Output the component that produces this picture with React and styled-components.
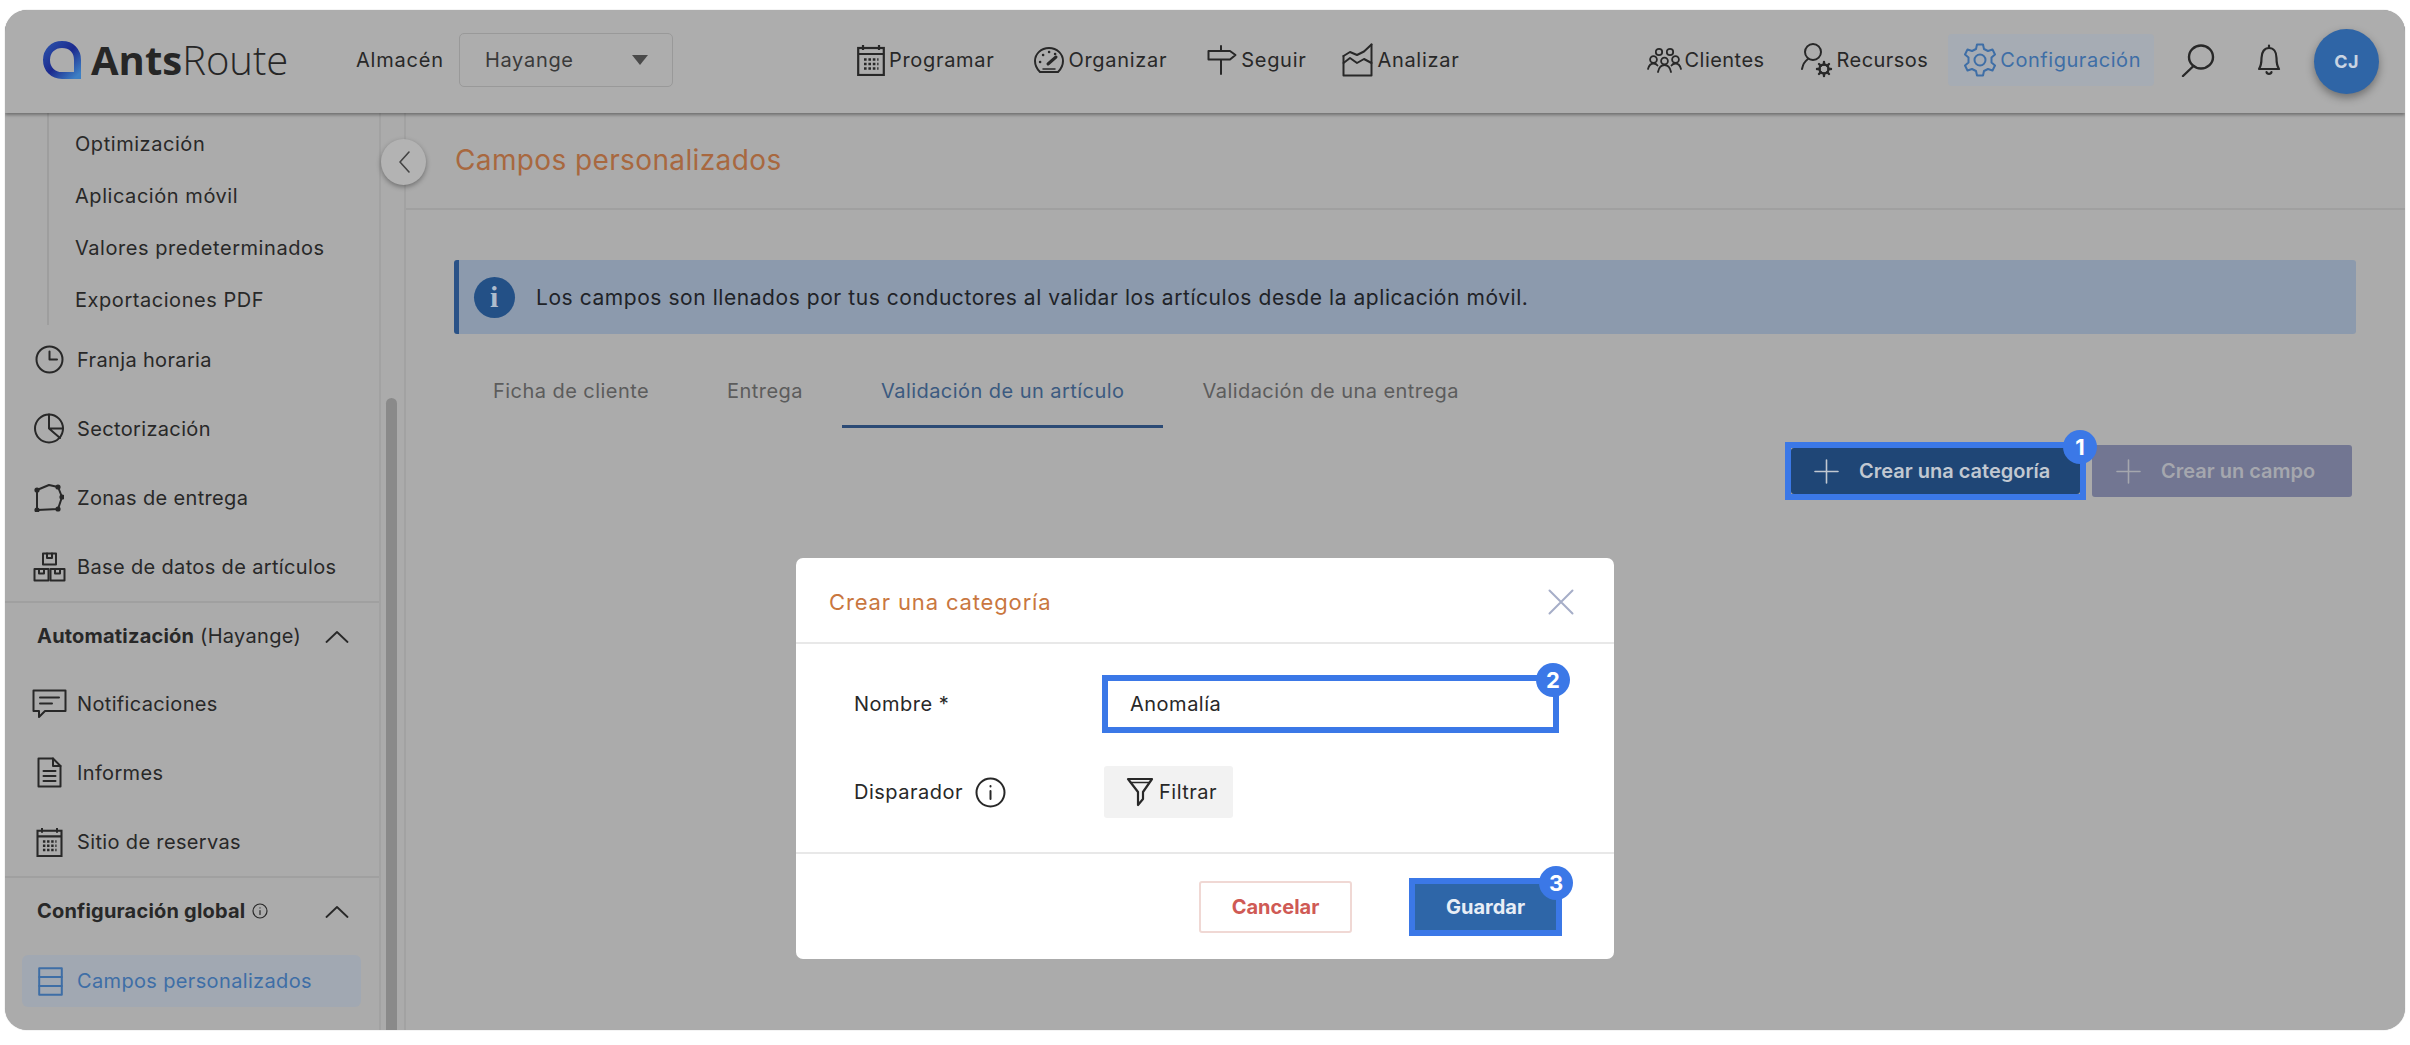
import React from "react";
import styled, { createGlobalStyle } from "styled-components";

const FONT = `"Inter", "Noto Sans", sans-serif`;
const ANNOTATE = "#3b78e7";

const GlobalStyle = createGlobalStyle`
  html, body {
    margin: 0;
    background: #fff;
  }
  body {
    font-family: ${FONT};
    color: #282828;
  }
  * {
    box-sizing: border-box;
  }
`;

const Page = styled.div`
  width: 2410px;
  height: 1045px;
  padding: 10px 5px 15px;
`;

const Frame = styled.div`
  position: relative;
  height: 100%;
  background: #ababab;
  border-radius: 22px;
  box-shadow: 0 0 1px #8f8f8f;
  overflow: hidden;
  display: flex;
  flex-direction: column;
`;

const Header = styled.header`
  height: 103px;
  flex: none;
  position: relative;
  z-index: 2;
  display: flex;
  align-items: center;
  padding: 0 26px 3px 37px;
  background: #adadad;
  box-shadow: 0 2px 3px rgba(0, 0, 0, 0.35);
`;

const Logo = styled.div`
  display: flex;
  align-items: center;
  gap: 9px;
  width: 246px;
  svg {
    flex: none;
  }
`;

const LogoText = styled.span`
  font-family: "Open Sans", sans-serif;
  font-size: 40px;
  font-weight: 300;
  line-height: 1;
  color: #262626;
  b {
    font-weight: 700;
  }
`;

const StoreLabel = styled.span`
  margin-left: 68px;
  font-size: 20px;
  letter-spacing: 0.8px;
`;

const StoreSelect = styled.div`
  margin-left: 15px;
  width: 214px;
  height: 54px;
  display: flex;
  align-items: center;
  justify-content: space-between;
  padding: 0 24px 0 25px;
  border: 1px solid #999;
  border-radius: 5px;
  font-size: 20px;
  color: #3a3a3a;
  letter-spacing: 0.7px;
`;

const Caret = styled.span`
  width: 0;
  height: 0;
  border-left: 8px solid transparent;
  border-right: 8px solid transparent;
  border-top: 10px solid #4a4a4a;
`;

const MainNav = styled.nav`
  margin-left: 184px;
  display: flex;
  align-items: center;
  gap: 40px;
  letter-spacing: 0.7px;
`;

const SideNav = styled.nav`
  margin-left: auto;
  display: flex;
  align-items: center;
  letter-spacing: 0.45px;
`;

const NavItem = styled.a`
  display: flex;
  align-items: center;
  gap: ${(p) => (p.$tight ? 3 : 4)}px;
  font-size: 20px;
  color: ${(p) => (p.$active ? "#3e6ea6" : "#282828")};
  margin-left: ${(p) => p.$gap || 0}px;
  ${(p) =>
    p.$active &&
    `
    height: 52px;
    padding: 0 13px 0 16px;
    letter-spacing: 0.55px;
    background: #a6acb4;
    border-radius: 4px;
  `}
`;

const IconButton = styled.span`
  display: flex;
  margin-left: ${(p) => p.$gap}px;
`;

const Avatar = styled.div`
  margin: 3px 0 0 33px;
  width: 65px;
  height: 65px;
  border-radius: 50%;
  background: #2f65a6;
  color: #c9d4e2;
  font-size: 18px;
  font-weight: 700;
  display: flex;
  align-items: center;
  justify-content: center;
  box-shadow: 0 4px 8px rgba(0, 0, 0, 0.35);
`;

const Body = styled.div`
  position: relative;
  flex: 1;
  min-height: 0;
  display: flex;
`;

const Sidebar = styled.aside`
  width: 376px;
  flex: none;
  border-right: 2px solid #a2a2a2;
  overflow: hidden;
`;

const SubList = styled.div`
  margin-left: 42px;
  height: 212px;
  padding: 5px 0 0 26px;
  border-left: 2px solid #9e9e9e;
`;

const SubItem = styled.div`
  height: 52px;
  display: flex;
  align-items: center;
  font-size: 20px;
  letter-spacing: 0.55px;
`;

const MenuRow = styled.div`
  height: ${(p) => (p.$active ? 52 : 69)}px;
  margin: ${(p) => (p.$active ? "11px 18px 0 17px" : "0 18px 0 12px")};
  padding-left: ${(p) => (p.$active ? 9 : 13)}px;
  display: flex;
  align-items: center;
  gap: ${(p) => (p.$active ? 8 : 9)}px;
  font-size: 20px;
  letter-spacing: 0.35px;
  border-radius: 6px;
  color: ${(p) => (p.$active ? "#3e6ea6" : "#282828")};
  background: ${(p) => (p.$active ? "#a1a8b2" : "transparent")};
`;

const MenuIcon = styled.span`
  width: 38px;
  flex: none;
  display: flex;
  justify-content: center;
`;

const SectionHead = styled.div`
  height: 68px;
  display: flex;
  align-items: center;
  justify-content: space-between;
  padding: 0 30px 0 32px;
  font-size: 20px;
  letter-spacing: 0.3px;
  border-top: 2px solid #a0a0a0;
`;

const SectionTitle = styled.span`
  display: flex;
  align-items: center;
  gap: 7px;
  b {
    font-weight: 700;
    letter-spacing: 0.2px;
  }
`;

const ScrollGutter = styled.div`
  width: 25px;
  flex: none;
  padding: 285px 7px 0 5px;
  border-right: 2px solid #a2a2a2;
`;

const ScrollThumb = styled.div`
  height: 100%;
  background: #8a8a8a;
  border-radius: 7px 7px 0 0;
`;

const CollapseButton = styled.button`
  position: absolute;
  left: 376px;
  top: 26px;
  width: 45px;
  height: 46px;
  padding: 0;
  border: none;
  border-radius: 50%;
  background: #b3b3b3;
  color: #444;
  display: flex;
  align-items: center;
  justify-content: center;
  box-shadow: 0 2px 5px rgba(0, 0, 0, 0.35);
`;

const Main = styled.main`
  flex: 1;
  min-width: 0;
`;

const TitleBar = styled.div`
  height: 97px;
  padding-left: 49px;
  display: flex;
  align-items: center;
  border-bottom: 2px solid #a0a0a0;
`;

const PageTitle = styled.h1`
  margin: 0 0 2px;
  font-size: 28px;
  font-weight: 400;
  letter-spacing: 0.38px;
  color: #a8683f;
`;

const Content = styled.div`
  padding: 50px 49px 0 48px;
`;

const Banner = styled.div`
  height: 74px;
  display: flex;
  align-items: center;
  gap: 21px;
  padding-left: 15px;
  background: #8c9aad;
  border-left: 5px solid #2a5287;
  border-radius: 3px;
  font-size: 21px;
  letter-spacing: 0.56px;
  color: #1f2328;
`;

const InfoDot = styled.span`
  width: 41px;
  height: 41px;
  border-radius: 50%;
  background: #235086;
  color: #aebccd;
  font-family: "Liberation Serif", serif;
  font-size: 30px;
  font-weight: 700;
  display: flex;
  align-items: center;
  justify-content: center;
`;

const Tabs = styled.div`
  margin-top: 26px;
  display: flex;
`;

const Tab = styled.div`
  height: 68px;
  padding: 0 39px 4px;
  display: flex;
  align-items: center;
  font-size: 20px;
  letter-spacing: 0.45px;
  color: ${(p) => (p.$active ? "#3b5a80" : "#5c5c5c")};
  border-bottom: 3px solid ${(p) => (p.$active ? "#2b4a75" : "transparent")};
`;

const Actions = styled.div`
  margin-top: 14px;
  padding-right: 4px;
  display: flex;
  justify-content: flex-end;
  align-items: center;
  gap: 6px;
`;

const Marked = styled.div`
  position: relative;
  display: flex;
  border: 6px solid ${ANNOTATE};
`;

const Badge = styled.span`
  position: absolute;
  top: -18px;
  right: -17px;
  width: 34px;
  height: 34px;
  border-radius: 50%;
  background: ${ANNOTATE};
  color: #fff;
  font-size: 22px;
  font-weight: 700;
  display: flex;
  align-items: center;
  justify-content: center;
`;

const CreateButton = styled.button`
  width: ${(p) => p.$width}px;
  height: ${(p) => p.$height}px;
  padding: 0 0 0 ${(p) => p.$inset}px;
  border: none;
  border-radius: 3px;
  background: ${(p) => (p.$disabled ? "#727692" : "#1f4676")};
  color: ${(p) => (p.$disabled ? "#a5a7ae" : "#c1c8d1")};
  display: flex;
  align-items: center;
  gap: 20px;
  font-family: ${FONT};
  font-size: 20px;
  font-weight: 600;
`;

const Modal = styled.section`
  position: absolute;
  left: 791px;
  top: 548px;
  width: 818px;
  height: 401px;
  z-index: 3;
  background: #fff;
  border-radius: 7px;
  display: flex;
  flex-direction: column;
`;

const ModalHead = styled.div`
  height: 86px;
  flex: none;
  display: flex;
  align-items: center;
  justify-content: space-between;
  padding: 4px 40px 0 33px;
  border-bottom: 2px solid #e8e8e8;
`;

const ModalTitle = styled.h2`
  margin: 0;
  font-size: 22px;
  font-weight: 400;
  letter-spacing: 0.85px;
  color: #c9773f;
`;

const ModalBody = styled.div`
  flex: 1;
  padding: 31px 55px 0 58px;
  border-bottom: 2px solid #e8e8e8;
  display: flex;
  flex-direction: column;
  gap: 33px;
`;

const FieldRow = styled.div`
  display: grid;
  grid-template-columns: 248px 1fr;
  align-items: center;
`;

const FieldLabel = styled.span`
  display: flex;
  align-items: center;
  gap: 12px;
  font-size: 20px;
  letter-spacing: 0.5px;
`;

const NameInput = styled.div`
  flex: 1;
  height: 46px;
  padding-left: 22px;
  display: flex;
  align-items: center;
  font-size: 20px;
  letter-spacing: 0.5px;
`;

const FilterButton = styled.button`
  width: 129px;
  height: 52px;
  margin-left: 2px;
  padding: 0 0 0 22px;
  border: none;
  border-radius: 3px;
  background: #f2f2f2;
  color: #282828;
  display: flex;
  align-items: center;
  gap: 5px;
  font-family: ${FONT};
  font-size: 20px;
  letter-spacing: 0.5px;
`;

const ModalFoot = styled.div`
  height: 105px;
  flex: none;
  display: flex;
  align-items: center;
  justify-content: flex-end;
  gap: 57px;
  padding-right: 52px;
`;

const CancelButton = styled.button`
  width: 153px;
  height: 52px;
  padding: 0;
  background: #fff;
  border: 2px solid #f0d8d4;
  border-radius: 3px;
  color: #cf5a55;
  font-family: ${FONT};
  font-size: 20px;
  font-weight: 700;
`;

const SaveButton = styled.button`
  width: 141px;
  height: 46px;
  padding: 0;
  border: none;
  background: #2e66a8;
  color: #e8eef6;
  font-family: ${FONT};
  font-size: 20px;
  font-weight: 700;
`;

const Stroke = ({ w, h, sw = 2, children, color = "currentColor" }) => (
  <svg width={w} height={h} viewBox={`0 0 ${w} ${h}`} fill="none" stroke={color} strokeWidth={sw} strokeLinecap="round" strokeLinejoin="round">
    {children}
  </svg>
);

const LogoMark = () => (
  <svg width="40" height="40" viewBox="0 0 40 40" fill="none">
    <defs>
      <linearGradient id="logoRing" x1="0" y1="0" x2="1" y2="1">
        <stop offset="0" stopColor="#2a4fa8" />
        <stop offset="0.5" stopColor="#1c2a8e" />
        <stop offset="1" stopColor="#3d7fc4" />
      </linearGradient>
    </defs>
    <path d="M20 4.5 C29.5 4.5 35.5 11 35.5 20 V35.5 H20 C11 35.5 4.5 29 4.5 20 C4.5 11 11 4.5 20 4.5 Z" stroke="url(#logoRing)" strokeWidth="7" />
  </svg>
);

const CalendarIcon = ({ w = 28, h = 32 }) => (
  <svg width={w} height={h} viewBox="0 0 28 32" fill="none" stroke="currentColor" strokeWidth="2.2">
    <rect x="1.2" y="4" width="25.6" height="27" />
    <path d="M1.2 10 H26.8 M6 1 V6 M22 1 V6" />
    <path d="M7 15.5 H21.5 M7 20 H21.5 M7 24.5 H21.5" strokeWidth="2.6" strokeDasharray="2.6 1.8" />
  </svg>
);

const GaugeIcon = () => (
  <Stroke w={30} h={26}>
    <path d="M6 25 C2 21 1 18 1 14 C1 7 7 1 15 1 C23 1 29 7 29 14 C29 18 28 21 24 25 Z" />
    <path d="M14 17 L22 10" strokeWidth="3" />
    <path d="M6 15 H6.2 M9 8 H9.2 M15 5 H15.2 M21 7 H21.2" strokeWidth="2.4" />
    <path d="M9 22 H21" strokeWidth="1.5" />
  </Stroke>
);

const SignIcon = () => (
  <Stroke w={30} h={30}>
    <path d="M1.5 6 H23 L28.5 10 L23 14.5 H1.5 Z" />
    <path d="M14 1 V5 M14 15 V29" />
  </Stroke>
);

const ChartIcon = () => (
  <Stroke w={31} h={34}>
    <path d="M1.5 13 V32.5 H29.5 V1.5" />
    <path d="M1.5 13 L8 9 L15 12 L22 8.5 L29.5 1.5" />
    <path d="M1.5 20 L8 15 L15 20 L22 16 L29.5 20" />
  </Stroke>
);

const ClientsIcon = () => (
  <Stroke w={35} h={26} sw={1.8}>
    <circle cx="12" cy="5" r="3.2" />
    <circle cx="23" cy="5" r="3.2" />
    <circle cx="6.5" cy="12.5" r="3.4" />
    <circle cx="17.5" cy="14" r="3.4" />
    <circle cx="28.5" cy="12.5" r="3.4" />
    <path d="M1 22 C2 18 4 16.5 6.5 16.5 C8 16.5 9.5 17 10.5 18.5 M24.5 18.5 C25.5 17 27 16.5 28.5 16.5 C31 16.5 33 18 34 22" />
    <path d="M11 25 C12 20 15 18 17.5 18 C20 18 23 20 24 25" />
  </Stroke>
);

const ResourcesIcon = () => (
  <Stroke w={33} h={36}>
    <circle cx="12" cy="10" r="8" />
    <path d="M1 27 C2 22 4 19 7 17" />
    <circle cx="23" cy="27" r="4.5" strokeWidth="2.4" />
    <path d="M23 20 V22.5 M23 31.5 V34 M16 27 H18.5 M27.5 27 H30 M18 22 L19.8 23.8 M26.2 30.2 L28 32 M28 22 L26.2 23.8 M19.8 30.2 L18 32" strokeWidth="2.4" />
  </Stroke>
);

const GearIcon = () => (
  <Stroke w={32} h={34} color="#3e6ea6">
    <path d="M13 1.5 H19 L20 6 L24 8 L28.5 6.5 L31 11.5 L27.5 14.5 V19.5 L31 22.5 L28.5 27.5 L24 26 L20 28 L19 32.5 H13 L12 28 L8 26 L3.5 27.5 L1 22.5 L4.5 19.5 V14.5 L1 11.5 L3.5 6.5 L8 8 L12 6 Z" />
    <circle cx="16" cy="17" r="5.5" />
  </Stroke>
);

const SearchIcon = () => (
  <Stroke w={34} h={33} sw={2.4}>
    <ellipse cx="20" cy="13" rx="12" ry="11.5" />
    <path d="M12.5 22 L2 32" />
  </Stroke>
);

const BellIcon = () => (
  <Stroke w={24} h={32} sw={2.2}>
    <path d="M12 1.5 V4 M2 25 C4 22 4.5 20 4.5 14 C4.5 8 7.5 4 12 4 C16.5 4 19.5 8 19.5 14 C19.5 20 20 22 22 25 Z" />
    <path d="M9.5 28 C10 30.5 14 30.5 14.5 28" />
  </Stroke>
);

const ClockIcon = () => (
  <Stroke w={29} h={29}>
    <circle cx="14.5" cy="14.5" r="13" />
    <path d="M14.5 6.5 V14.5 H22" />
  </Stroke>
);

const PieIcon = () => (
  <Stroke w={32} h={31}>
    <circle cx="16" cy="15.5" r="14" />
    <path d="M16 1.5 V15.5 H30 M16 15.5 L27 25" />
  </Stroke>
);

const ZoneIcon = () => (
  <Stroke w={30} h={29}>
    <path d="M3 7 L15 2 L24 4 L28 14 L24 26 L3 27 Z" />
    <g fill="currentColor">
      <circle cx="3" cy="7" r="1.6" />
      <circle cx="24" cy="4" r="1.6" />
      <circle cx="28" cy="14" r="1.6" />
      <circle cx="24" cy="26" r="1.6" />
      <circle cx="3" cy="27" r="1.6" />
    </g>
  </Stroke>
);

const BoxesIcon = () => (
  <Stroke w={33} h={30}>
    <rect x="10" y="1.5" width="13" height="11" />
    <rect x="1.5" y="17" width="14" height="11.5" />
    <rect x="17.5" y="17" width="14" height="11.5" />
    <path d="M14 1.5 V6 H19 V1.5 M6 17 V21.5 H11 V17 M22 17 V21.5 H27 V17" />
  </Stroke>
);

const ChatIcon = () => (
  <Stroke w={35} h={30}>
    <path d="M1.5 1.5 H33.5 V22 H13 L7 28 V22 H1.5 Z" />
    <path d="M8 8.5 H27 M8 14.5 H20" />
  </Stroke>
);

const DocIcon = () => (
  <Stroke w={25} h={31}>
    <path d="M1.5 1.5 H16 L23.5 9 V29.5 H1.5 Z" />
    <path d="M16 1.5 V9 H23.5 M6.5 14 H18.5 M6.5 19 H18.5 M6.5 24 H18.5" />
  </Stroke>
);

const LayersIcon = () => (
  <Stroke w={25} h={29} color="#3e6ea6">
    <rect x="1.2" y="1.2" width="22.6" height="26.6" />
    <path d="M1.2 10 H23.8 M1.2 19 H23.8" />
  </Stroke>
);

const Chevron = () => (
  <Stroke w={24} h={13} sw={1.8}>
    <path d="M1.5 12 L12 2 L22.5 12" />
  </Stroke>
);

const SmallInfo = () => (
  <Stroke w={16} h={16} sw={1.2}>
    <circle cx="8" cy="8" r="7" />
    <path d="M8 7.5 V11.5 M8 4.8 V5" />
  </Stroke>
);

const BigInfo = () => (
  <Stroke w={31} h={31} sw={2}>
    <circle cx="15.5" cy="15.5" r="14" />
    <path d="M15.5 14 V22 M15.5 9 V9.5" />
  </Stroke>
);

const PlusIcon = () => (
  <Stroke w={25} h={25} sw={1.6}>
    <path d="M12.5 1 V24 M1 12.5 H24" />
  </Stroke>
);

const CloseIcon = () => (
  <Stroke w={26} h={26} sw={2} color="#a6aec8">
    <path d="M1.5 1.5 L24.5 24.5 M24.5 1.5 L1.5 24.5" />
  </Stroke>
);

const FunnelIcon = () => (
  <Stroke w={28} h={30} sw={2.2}>
    <path d="M2 2 H26 L17 15 V22 L12 28 V15 Z" />
    <path d="M5 5.5 H23" strokeWidth="1.4" />
  </Stroke>
);

const BackIcon = () => (
  <Stroke w={14} h={24} sw={1.6}>
    <path d="M12 2 L3 12 L12 22" />
  </Stroke>
);

const subItems = ["Optimización", "Aplicación móvil", "Valores predeterminados", "Exportaciones PDF"];

const tabs = ["Ficha de cliente", "Entrega", "Validación de un artículo", "Validación de una entrega"];

const App = () => (
  <Page>
    <GlobalStyle />
    <Frame>
      <Header>
        <Logo>
          <LogoMark />
          <LogoText>
            <b>Ants</b>Route
          </LogoText>
        </Logo>
        <StoreLabel>Almacén</StoreLabel>
        <StoreSelect>
          Hayange
          <Caret />
        </StoreSelect>
        <MainNav>
          <NavItem><CalendarIcon />Programar</NavItem>
          <NavItem><GaugeIcon />Organizar</NavItem>
          <NavItem><SignIcon />Seguir</NavItem>
          <NavItem $gap={-4}><ChartIcon />Analizar</NavItem>
        </MainNav>
        <SideNav>
          <NavItem $tight><ClientsIcon />Clientes</NavItem>
          <NavItem $gap={36} $tight><ResourcesIcon />Recursos</NavItem>
          <NavItem $gap={20} $active><GearIcon />Configuración</NavItem>
          <IconButton $gap={27}><SearchIcon /></IconButton>
          <IconButton $gap={42}><BellIcon /></IconButton>
          <Avatar>CJ</Avatar>
        </SideNav>
      </Header>
      <Body>
        <Sidebar>
          <SubList>
            {subItems.map((item) => (
              <SubItem key={item}>{item}</SubItem>
            ))}
          </SubList>
          <MenuRow><MenuIcon><ClockIcon /></MenuIcon>Franja horaria</MenuRow>
          <MenuRow><MenuIcon><PieIcon /></MenuIcon>Sectorización</MenuRow>
          <MenuRow><MenuIcon><ZoneIcon /></MenuIcon>Zonas de entrega</MenuRow>
          <MenuRow><MenuIcon><BoxesIcon /></MenuIcon>Base de datos de artículos</MenuRow>
          <SectionHead>
            <SectionTitle><span><b>Automatización</b> (Hayange)</span></SectionTitle>
            <Chevron />
          </SectionHead>
          <MenuRow><MenuIcon><ChatIcon /></MenuIcon>Notificaciones</MenuRow>
          <MenuRow><MenuIcon><DocIcon /></MenuIcon>Informes</MenuRow>
          <MenuRow><MenuIcon><CalendarIcon w={27} h={30} /></MenuIcon>Sitio de reservas</MenuRow>
          <SectionHead>
            <SectionTitle><b>Configuración global</b><SmallInfo /></SectionTitle>
            <Chevron />
          </SectionHead>
          <MenuRow $active><MenuIcon><LayersIcon /></MenuIcon>Campos personalizados</MenuRow>
        </Sidebar>
        <ScrollGutter>
          <ScrollThumb />
        </ScrollGutter>
        <CollapseButton><BackIcon /></CollapseButton>
        <Main>
          <TitleBar>
            <PageTitle>Campos personalizados</PageTitle>
          </TitleBar>
          <Content>
            <Banner>
              <InfoDot>i</InfoDot>
              Los campos son llenados por tus conductores al validar los artículos desde la aplicación móvil.
            </Banner>
            <Tabs>
              {tabs.map((tab, i) => (
                <Tab key={tab} $active={i === 2}>{tab}</Tab>
              ))}
            </Tabs>
            <Actions>
              <Marked>
                <CreateButton $width={289} $height={46} $inset={23}><PlusIcon />Crear una categoría</CreateButton>
                <Badge>1</Badge>
              </Marked>
              <CreateButton $width={260} $height={52} $inset={24} $disabled><PlusIcon />Crear un campo</CreateButton>
            </Actions>
          </Content>
        </Main>
      </Body>
      <Modal>
        <ModalHead>
          <ModalTitle>Crear una categoría</ModalTitle>
          <CloseIcon />
        </ModalHead>
        <ModalBody>
          <FieldRow>
            <FieldLabel>Nombre *</FieldLabel>
            <Marked>
              <NameInput>Anomalía</NameInput>
              <Badge>2</Badge>
            </Marked>
          </FieldRow>
          <FieldRow>
            <FieldLabel>Disparador <BigInfo /></FieldLabel>
            <FilterButton><FunnelIcon />Filtrar</FilterButton>
          </FieldRow>
        </ModalBody>
        <ModalFoot>
          <CancelButton>Cancelar</CancelButton>
          <Marked>
            <SaveButton>Guardar</SaveButton>
            <Badge>3</Badge>
          </Marked>
        </ModalFoot>
      </Modal>
    </Frame>
  </Page>
);

export default App;
